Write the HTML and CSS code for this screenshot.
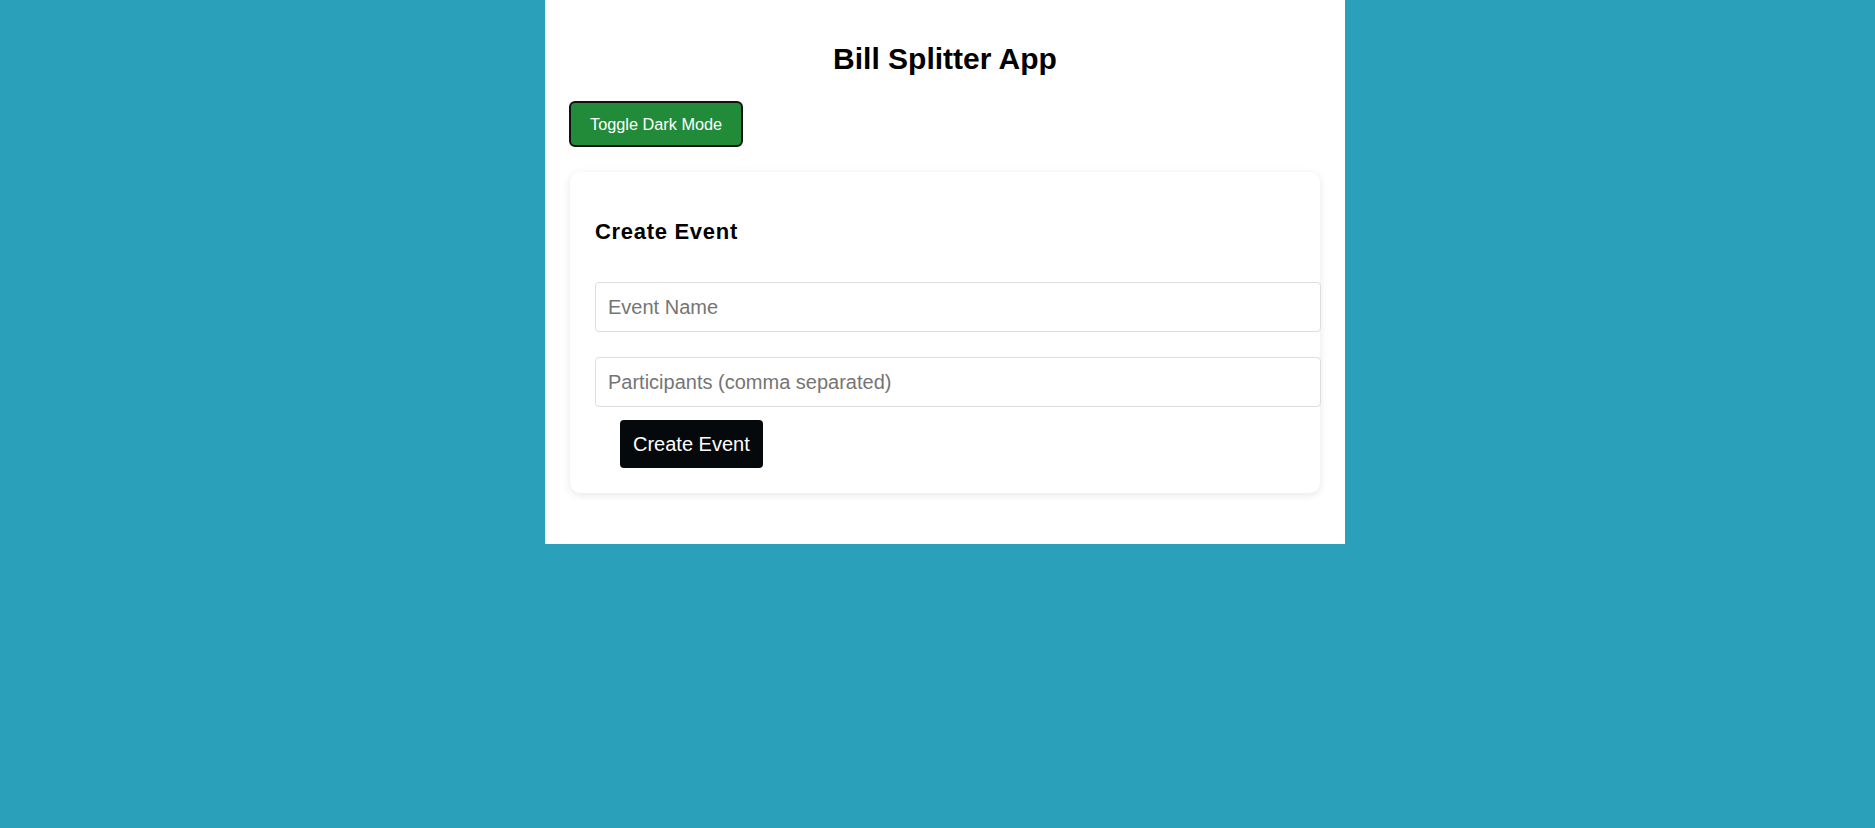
FILE: index.html
```html
<!DOCTYPE html>
<html lang="en">
<head>
<meta charset="utf-8">
<title>Bill Splitter App</title>
<link rel="stylesheet" href="styles.css">
</head>
<body>
  <div class="app">
    <h1 class="app-title">Bill Splitter App</h1>
    <button class="toggle-btn" type="button">Toggle Dark Mode</button>
    <div class="card">
      <h3 class="card-title">Create Event</h3>
      <input class="field field-first" type="text" placeholder="Event Name">
      <input class="field" type="text" placeholder="Participants (comma separated)">
      <button class="primary-btn" type="button">Create Event</button>
    </div>
  </div>
</body>
</html>
```

FILE: styles.css
```css
html, body {
  margin: 0;
  padding: 0;
}

body {
  background: #2ba0bb;
  padding-left: 15px;
  font-family: "Liberation Sans", Arial, sans-serif;
  color: #000;
  min-height: 828px;
  box-sizing: border-box;
}

.app {
  width: 800px;
  margin: 0 auto;
  background: #fff;
  padding: 42px 25px 25px;
  box-sizing: border-box;
}

.app-title {
  margin: 0 0 24px;
  font-size: 30px;
  font-weight: bold;
  text-align: center;
  line-height: 34.5px;
}

.toggle-btn {
  display: block;
  font-family: "Liberation Sans", Arial, sans-serif;
  font-size: 16.3px;
  line-height: 18px;
  padding: 12px 19px;
  background: #228b3a;
  color: #fff;
  border: 2px solid #111;
  border-radius: 6px;
  margin: 0 0 25px -1px;
}

.card {
  background: #fff;
  border-radius: 10px;
  box-shadow: 0 2px 8px rgba(0, 0, 0, 0.1);
  padding: 25px;
  margin-bottom: 26px;
}

.card-title {
  margin: 22px 0 38px;
  font-size: 22px;
  line-height: 25px;
  letter-spacing: 0.7px;
  font-weight: bold;
}

.field {
  display: block;
  width: 100%;
  box-sizing: content-box;
  font-family: "Liberation Sans", Arial, sans-serif;
  font-size: 20px;
  line-height: 24px;
  padding: 12px;
  border: 1px solid #ddd;
  border-radius: 4px;
  margin: 0;
  color: #000;
  background: #fff;
}

.field::placeholder {
  color: #757575;
}

.field-first {
  margin-bottom: 25px;
}

.primary-btn {
  display: block;
  margin: 13px 0 0 25px;
  font-family: "Liberation Sans", Arial, sans-serif;
  font-size: 20px;
  line-height: 24px;
  padding: 12px 13px;
  background: #05090c;
  color: #fff;
  border: none;
  border-radius: 4px;
}
```
